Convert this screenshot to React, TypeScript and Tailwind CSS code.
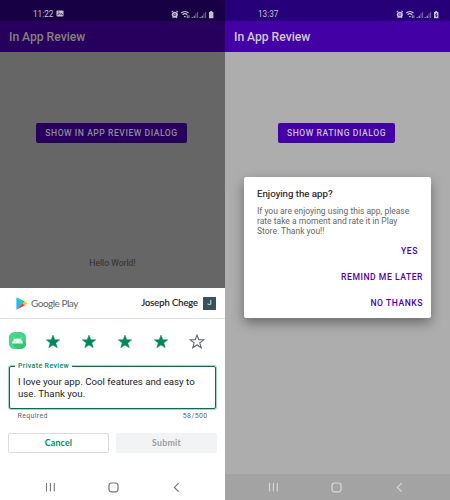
import React from "react";

function StatusIcons({ charging }: { charging?: boolean }) {
  return (
    <svg width="43" height="9" viewBox="0 0 43 9" fill="none" stroke="currentColor">
      <circle cx="3.8" cy="4.7" r="2.2" strokeWidth="1.7" />
      <path d="M.7 2.1 2.2.9M6.9 2.1 5.4.9M1.6 7.8l.8-.8M6 7.8l-.8-.8M3.8 3.6v1.3h.9" strokeWidth="1.1" />
      <path d="M10.3 3c2.1-2 5.2-2 7.2 0M11.6 4.7c1.4-1.3 3.2-1.3 4.6 0" strokeWidth="1.2" />
      <path d="M12.6 6h2.6L13.9 7.6z" fill="currentColor" stroke="none" />
      <path d="M16.3 5.3v2.8M17.9 5.3v2.8" strokeWidth=".8" />
      <path d="M21.2 8V7M23.2 8V5.8" strokeWidth="1.1" opacity=".85" />
      <path d="M25 8V3.4M26.6 8V2" strokeWidth="1" opacity=".5" />
      <path d="M29.2 8V7M31.2 8V5.8" strokeWidth="1.1" opacity=".85" />
      <path d="M33 8V3.4M34.6 8V2" strokeWidth="1" opacity=".5" />
      <path d="M38 2h1.2V1h2v1h1.2v6.2H38z" fill="currentColor" stroke="none" />
      {charging && <path d="M40.7 3.2 39.5 5.2h1.5l-1 1.8" stroke="#26007a" strokeWidth=".9" />}
    </svg>
  );
}

function NavBar({ className }: { className: string }) {
  return (
    <svg className={className} width="225" height="26" viewBox="0 0 225 26" fill="none" stroke="currentColor">
      <path d="M46.5 9v8.4M50.4 9v8.4M54.3 9v8.4" strokeWidth="1.1" />
      <rect x="109" y="9" width="9" height="8.8" rx="2.5" strokeWidth="1.2" />
      <path d="m178.6 9.2-4.2 4.2 4.2 4.2" strokeWidth="1.2" />
    </svg>
  );
}

function Star({ filled }: { filled?: boolean }) {
  return (
    <svg width="16" height="16" viewBox="0 0 24 24">
      <path
        d="m12 1.6 2.7 7.1h7.5l-6 4.7 2.2 7.3-6.4-4.3-6.4 4.3 2.2-7.3-6-4.7h7.5z"
        fill={filled ? "#01875f" : "none"}
        stroke={filled ? "#01875f" : "#5f6368"}
        strokeWidth={filled ? 0.7 : 1.6}
      />
    </svg>
  );
}

function PlayLogo() {
  return (
    <svg width="12" height="13" viewBox="0 0 12 13">
      <path d="M.4.2v12.6L6.7 6.5z" fill="#20bdf5" />
      <path d="M.4.2 8.8 4.6 6.7 6.7z" fill="#12d675" />
      <path d="M.4 12.8 8.8 8.4 6.7 6.3z" fill="#f33a4b" />
      <path d="M8.8 4.5 11.7 6.4 8.8 8.4 6.7 6.5z" fill="#ffc414" />
    </svg>
  );
}

function AndroidIcon() {
  return (
    <svg className="mb-[3px]" width="17" height="17" viewBox="0 0 17 17">
      <rect width="17" height="17" rx="5.5" fill="#45d588" />
      <path d="M13.8 8.3 17 11v1a5 5 0 0 1-5 5H8l-4.5-5z" fill="#37c47a" />
      <path d="M3 11.6a5.5 5 0 0 1 11 0z" fill="#e9faf1" />
      <path d="m4.4 5.6 1.4 2M12.6 5.6l-1.4 2" stroke="#e9faf1" strokeWidth=".7" />
      <circle cx="6" cy="9.7" r=".55" fill="#3ddc84" />
      <circle cx="11" cy="9.7" r=".55" fill="#3ddc84" />
    </svg>
  );
}

function ReviewScreen() {
  return (
    <section className="flex h-[500px] w-[225px] flex-col bg-white">
      <header className="flex h-[21px] items-center justify-between bg-[#170044] pl-[33px] pr-[11px] pt-[7px] text-[#c4bfd0]">
        <span className="flex items-center gap-[3px] text-[8.2px] leading-none">
          11:22
          <svg width="8" height="7" viewBox="0 0 8 7">
            <rect x=".5" y=".5" width="7" height="6" rx=".8" fill="currentColor" />
            <path d="m1.3 5.3 1.8-2 1.2 1.2 1-1.1 1.5 1.9M2.2 2h1" stroke="#170044" strokeWidth=".8" fill="none" />
          </svg>
        </span>
        <StatusIcons />
      </header>
      <h1 className="flex h-[31px] items-center bg-[#27005e] pl-[9px] pt-px text-[12.2px] font-medium tracking-[-0.05px] text-[#858079]">In App Review</h1>
      <main className="flex h-[236px] flex-col items-center bg-[#666]">
        <div className="mt-[71px] flex h-5 w-[151px] -translate-x-px items-center justify-center whitespace-nowrap rounded-[2px] bg-[#27005e] text-[8.6px] font-medium tracking-[0.53px] text-[#928b99]">
          SHOW IN APP REVIEW DIALOG
        </div>
        <p className="mt-[114px] text-[8.6px] leading-3 text-[#2e2e2e]">Hello World!</p>
      </main>
      <div className="flex h-[31px] items-center border-b border-[#e3e3e3] pl-4 pr-[9px]">
        <PlayLogo />
        <span className="ml-[3px] whitespace-nowrap font-['Lato'] text-[10px] tracking-[-0.5px] text-[#5f6368]">Google Play</span>
        <span className="ml-auto mr-[5px] whitespace-nowrap font-['Lato'] text-[9.3px] text-[#202124] [-webkit-text-stroke:0.2px_#202124]">Joseph Chege</span>
        <span className="flex h-[13px] w-[13px] items-center justify-center bg-[#38515d] text-[8px] text-white">J</span>
      </div>
      <div className="flex h-[46px] items-center pl-[9px]">
        <AndroidIcon />
        <div className="ml-[18.5px] flex gap-5">
          <Star filled />
          <Star filled />
          <Star filled />
          <Star filled />
          <Star />
        </div>
      </div>
      <div className="relative mx-[9px] mt-px h-[43px] rounded-[2px] border border-[#01704f] pl-2 pt-[9px] shadow-[0_0_0_1px_rgba(1,135,95,0.35)]">
        <label className="absolute -top-[5px] left-[5px] bg-white px-[3px] text-[7px] font-medium leading-[9px] tracking-[0.36px] text-[#01875f]">Private Review</label>
        <p className="whitespace-nowrap text-[9.7px] leading-[12px] text-[#202124]">
          I love your app. Cool features and easy to
          <br />
          use. Thank you.
        </p>
      </div>
      <div className="mt-[3px] flex justify-between pl-[17.5px] pr-[17.5px] text-[7px] leading-[9px] tracking-[0.35px] text-[#5f6368]">
        <span>Required</span>
        <span>58/500</span>
      </div>
      <div className="mt-[12px] flex gap-[7px] px-2 font-['Lato'] text-[8.8px] font-bold tracking-[0.2px]">
        <div className="flex h-5 w-[101px] items-center justify-center rounded-[2px] border border-[#dadce0] text-[#01875f]">Cancel</div>
        <div className="flex h-5 w-[101px] items-center justify-center rounded-[2px] bg-[#f1f3f4] text-[#9a9ea2]">Submit</div>
      </div>
      <NavBar className="mt-auto text-[#777]" />
    </section>
  );
}

function RatingScreen() {
  return (
    <section className="flex h-[500px] w-[225px] flex-col bg-[#adadad]">
      <header className="flex h-[21px] items-center justify-between bg-[#260079] pl-[33px] pr-[11px] pt-[7px] text-[#c9c3d8]">
        <span className="text-[8.2px] leading-none">13:37</span>
        <StatusIcons charging />
      </header>
      <h1 className="flex h-[31px] items-center bg-[#4300a4] pl-[9px] pt-px text-[12.2px] font-medium tracking-[-0.05px] text-[#cfc8d2]">In App Review</h1>
      <main className="flex flex-1 flex-col items-center">
        <div className="mt-[71px] flex h-5 w-[117px] -translate-x-px items-center justify-center whitespace-nowrap rounded-[2px] bg-[#4300a4] text-[8.6px] font-medium tracking-[0.55px] text-[#c9bedb]">
          SHOW RATING DIALOG
        </div>
        <div className="mt-[34px] flex h-[141px] w-[187px] flex-col rounded-[2px] bg-white pl-[13px] pr-[8px] shadow-[0_5px_12px_rgba(0,0,0,0.38)]">
          <h2 className="mt-[11px] text-[9.7px] leading-3 text-[#222] [-webkit-text-stroke:0.15px_#222]">Enjoying the app?</h2>
          <p className="mt-[6px] whitespace-nowrap text-[8.5px] leading-[10px] text-[#666]">
            If you are enjoying using this app, please
            <br />
            rate take a moment and rate it in Play
            <br />
            Store. Thank you!!
          </p>
          <div className="mt-[10px] flex flex-col items-end gap-[16px] text-[8.6px] font-medium leading-[10px] tracking-[0.53px] text-[#4d00b0]">
            <span className="mr-[5px]">YES</span>
            <span>REMIND ME LATER</span>
            <span>NO THANKS</span>
          </div>
        </div>
      </main>
      <div className="h-[26px] bg-[#a3a3a3]">
        <NavBar className="-translate-x-[2px] text-[#d9d9d9]" />
      </div>
    </section>
  );
}

export default function App() {
  return (
    <div className="flex h-[500px] w-[450px] overflow-hidden font-['Roboto','Liberation_Sans',sans-serif]">
      <ReviewScreen />
      <RatingScreen />
    </div>
  );
}
